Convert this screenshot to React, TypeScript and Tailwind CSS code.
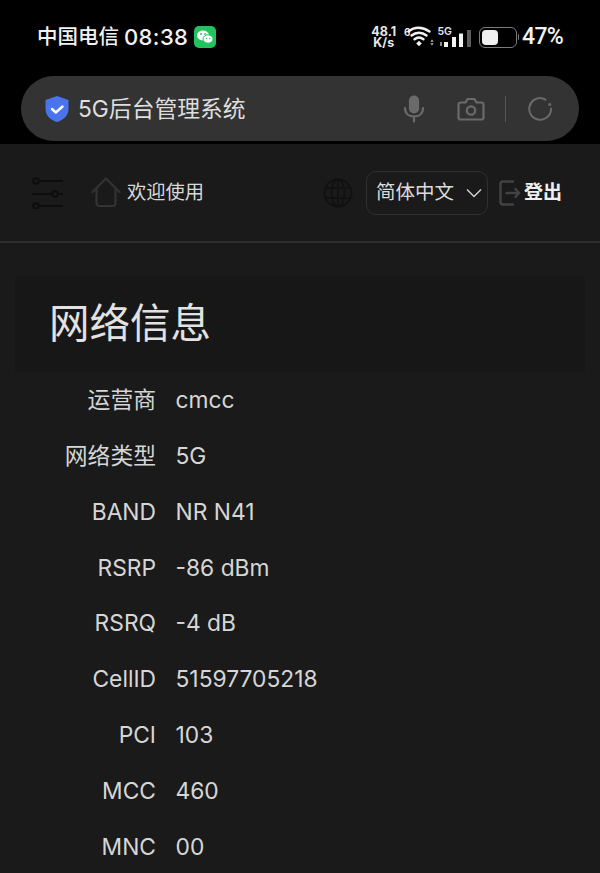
const FONT = "font-['Inter','Noto_Sans_CJK_SC',sans-serif]";

const rows: [string, string][] = [
  ["运营商", "cmcc"],
  ["网络类型", "5G"],
  ["BAND", "NR N41"],
  ["RSRP", "-86 dBm"],
  ["RSRQ", "-4 dB"],
  ["CellID", "51597705218"],
  ["PCI", "103"],
  ["MCC", "460"],
  ["MNC", "00"],
];

function WeChat() {
  return (
    <svg width="22" height="22" viewBox="0 0 22 22">
      <rect width="22" height="22" rx="5" fill="#22c35e" />
      <ellipse cx="9" cy="9.5" rx="6" ry="5" fill="#fff" />
      <ellipse cx="14" cy="13" rx="5" ry="4.2" fill="#fff" stroke="#22c35e" strokeWidth="1" />
      <circle cx="7" cy="8" r="0.9" fill="#22c35e" />
      <circle cx="11" cy="8" r="0.9" fill="#22c35e" />
      <circle cx="12.5" cy="12.5" r="0.7" fill="#22c35e" />
      <circle cx="15.8" cy="12.5" r="0.7" fill="#22c35e" />
    </svg>
  );
}

function Wifi() {
  return (
    <svg width="27" height="22" viewBox="0 0 27 22" fill="none" stroke="#f2f2f2" strokeLinecap="round">
      <path d="M1.5 5.5C7.5 0.5 15.5 0.5 22.5 5.5" strokeWidth="2.4" />
      <path d="M4.5 9.5C9 5.8 15 5.8 19.5 9.5" strokeWidth="2.4" />
      <path d="M7.5 13.3C10.3 11 13.7 11 16.5 13.3" strokeWidth="2.4" />
      <path d="M12 14.8L14.8 17.5L12 20.2L9.2 17.5Z" fill="#f2f2f2" stroke="none" />
      <path d="M25 13.5L26.6 15.8H23.4ZM25 19.5L23.4 17.2H26.6Z" fill="#bdbdbd" stroke="none" />
    </svg>
  );
}

function Signal() {
  return (
    <svg width="32" height="17" viewBox="0 0 32 17" fill="#f2f2f2">
      <rect x="0" y="12" width="2" height="4" fill="#8a8a8a" />
      <rect x="4" y="12" width="4" height="5" />
      <rect x="12" y="7" width="4" height="10" />
      <rect x="19" y="3.5" width="4" height="13.5" />
      <rect x="27" y="0" width="4" height="17" fill="#5c5c5c" />
    </svg>
  );
}

function Battery() {
  return (
    <div className="flex items-center gap-[1px]">
      <div className="flex h-[21px] w-[38px] items-center rounded-[6px] border border-[#7c7c7c] p-[2px]">
        <div className="h-full w-[16px] rounded-[4px] bg-[#f0f0f0]" />
      </div>
      <div className="h-[6px] w-[1.5px] rounded-r bg-[#7c7c7c]" />
    </div>
  );
}

function Shield() {
  return (
    <svg width="26" height="28" viewBox="0 0 26 28">
      <path d="M13 1L24.5 5V14C24.5 20.5 19.5 25 13 27C6.5 25 1.5 20.5 1.5 14V5Z" fill="#4a74ee" />
      <path d="M8 14L11.8 17.5L18.5 11.5" fill="none" stroke="#fff" strokeWidth="2.4" strokeLinecap="round" strokeLinejoin="round" />
    </svg>
  );
}

function Mic() {
  return (
    <svg width="22" height="28" viewBox="0 0 22 28" fill="none" stroke="#6a6a6a" strokeWidth="2.2" strokeLinecap="round">
      <rect x="7" y="1.5" width="8" height="16" rx="4" fill="#6a6a6a" />
      <path d="M2 13C2 18.5 6 21.5 11 21.5C16 21.5 20 18.5 20 13" />
      <path d="M11 21.5V26.5" />
    </svg>
  );
}

function Camera() {
  return (
    <svg width="28" height="24" viewBox="0 0 28 24" fill="none" stroke="#6a6a6a" strokeWidth="2.2" strokeLinejoin="round">
      <path d="M3.5 5.5H8.5L10.5 2H17.5L19.5 5.5H24.5C25.6 5.5 26.5 6.4 26.5 7.5V20.5C26.5 21.6 25.6 22.5 24.5 22.5H3.5C2.4 22.5 1.5 21.6 1.5 20.5V7.5C1.5 6.4 2.4 5.5 3.5 5.5Z" />
      <circle cx="14" cy="13.5" r="4.2" />
    </svg>
  );
}

function Reload() {
  return (
    <svg width="26" height="26" viewBox="0 0 26 26" fill="none" stroke="#6a6a6a" strokeWidth="2" strokeLinecap="round">
      <path d="M18.5 3.6C15 1.5 10.5 1.5 7 3.8C2 7.2 0.8 14 4 19C7.4 24 14 25.2 19 22C22.3 19.8 24.2 16 24 12.5" />
      <circle cx="22.8" cy="8.5" r="0.6" fill="#6a6a6a" />
    </svg>
  );
}

function Sliders() {
  return (
    <svg width="36" height="32" viewBox="0 0 36 32" fill="none" stroke="#0d0d0d" strokeWidth="2">
      <circle cx="5" cy="4" r="2.8" />
      <path d="M8 4H32" />
      <path d="M1 17H21" />
      <circle cx="24" cy="17" r="2.8" />
      <path d="M27 17H32" />
      <circle cx="5" cy="29" r="2.8" />
      <path d="M8 29H32" />
    </svg>
  );
}

function House() {
  return (
    <svg width="30" height="31" viewBox="0 0 30 31" fill="none" stroke="#333333" strokeWidth="2.2" strokeLinecap="round" strokeLinejoin="round">
      <path d="M1.5 15L15 1.5L28.5 15" />
      <path d="M5.5 12V26C5.5 28 6.5 29 8.5 29H21.5C23.5 29 24.5 28 24.5 26V12" />
    </svg>
  );
}

function Globe() {
  return (
    <svg width="30" height="30" viewBox="0 0 30 30" fill="none" stroke="#111111" strokeWidth="1.8">
      <circle cx="15" cy="15" r="13.5" />
      <ellipse cx="15" cy="15" rx="6.5" ry="13.5" />
      <path d="M15 1.5V28.5M2.5 10H27.5M2.5 20H27.5" />
    </svg>
  );
}

function Logout() {
  return (
    <svg width="22" height="26" viewBox="0 0 22 26" fill="none" stroke="#424242" strokeWidth="2.4" strokeLinecap="round" strokeLinejoin="round">
      <path d="M14 1.5H4C2.5 1.5 1.5 2.5 1.5 4V22C1.5 23.5 2.5 24.5 4 24.5H14" />
      <path d="M7.5 13H20M16.5 9L20 13L16.5 17" />
    </svg>
  );
}

export default function App() {
  return (
    <div className={`${FONT} flex h-[873px] w-[600px] flex-col overflow-hidden bg-[#1a1a1a]`}>
      <div className="h-[144px] shrink-0 bg-black">
        <div className="flex h-[76px] items-start justify-between px-[37px] pt-[25px] text-[#f2f2f2]">
          <div className="flex items-center">
            <span className="text-[20.5px] font-medium leading-[24px]">中国电信</span>
            <span className="ml-[5px] text-[22px] font-medium leading-[24px] tracking-[0.4px]">08:38</span>
            <div className="ml-[6px]">
              <WeChat />
            </div>
          </div>
          <div className="flex items-center">
            <div className="flex flex-col items-center text-[12.5px] font-bold leading-[11px] text-[#e8e8e8]">
              <span>48.1</span>
              <span>K/s</span>
            </div>
            <span className="mb-[11px] ml-[8px] text-[10px] font-semibold leading-[10px]">6</span>
            <div className="ml-[-4px]">
              <Wifi />
            </div>
            <div className="ml-[4px] flex flex-col items-start">
              <span className="mb-[-7px] text-[10.5px] font-semibold leading-[10px] text-[#e8e8e8]">5G</span>
              <div className="ml-[2px]">
                <Signal />
              </div>
            </div>
            <div className="ml-[7px]">
              <Battery />
            </div>
            <span className="ml-[3px] font-['Roboto',sans-serif] text-[23px] font-medium leading-[24px] tracking-[-0.7px]">47%</span>
          </div>
        </div>
        <div className="mx-[21px] flex h-[65px] items-center rounded-[33px] bg-[#333333] pl-[23px] pr-[26px]">
          <Shield />
          <span className="ml-[8px] text-[22.8px] leading-[28px] text-[#dedede]">5G后台管理系统</span>
          <div className="ml-auto flex items-center">
            <Mic />
            <div className="ml-[32px]">
              <Camera />
            </div>
            <div className="ml-[20px] h-[26px] w-[1px] bg-[#555]" />
            <div className="ml-[21px]">
              <Reload />
            </div>
          </div>
        </div>
      </div>

      <div className="flex h-[99px] shrink-0 items-center justify-between border-b-2 border-[#2e2e2e] pl-[31px] pr-[38px]">
        <div className="flex items-center">
          <Sliders />
          <div className="ml-[24px]">
            <House />
          </div>
          <span className="ml-[6px] mt-[-2px] text-[19.3px] leading-[26px] text-[#d8d8d8]">欢迎使用</span>
        </div>
        <div className="flex items-center">
          <div className="mr-[1px]">
            <Globe />
          </div>
          <div className="ml-[12px] flex h-[44px] w-[122px] items-center justify-between rounded-[10px] border border-[#303030] pl-[9px] pr-[5px] text-[19.5px] text-[#dcdcdc]">
            <span>简体中文</span>
            <svg width="16" height="10" viewBox="0 0 16 10" fill="none" stroke="#d0d0d0" strokeWidth="1.5">
              <path d="M1 1.5L8 8.5L15 1.5" />
            </svg>
          </div>
          <div className="ml-[11px]">
            <Logout />
          </div>
          <span className="ml-[3px] text-[19px] font-bold leading-[26px] text-[#eeeeee]">登出</span>
        </div>
      </div>

      <div className="mx-[15px] mt-[33px] flex flex-col">
        <div className="flex h-[96px] items-center rounded-t-[4px] bg-[#171717] pb-[1px] pl-[34px]">
          <h1 className="text-[40.5px] font-normal leading-[52px] text-[#e2e2e2]">网络信息</h1>
        </div>
        <div className="flex flex-col">
          {rows.map(([label, value]) => (
            <div key={label} className="flex h-[55.9px] items-center text-[22.8px] text-[#d6d6d6]">
              <span className="w-[141px] text-right">{label}</span>
              <span className="ml-[19.5px]">{value}</span>
            </div>
          ))}
        </div>
      </div>
    </div>
  );
}
